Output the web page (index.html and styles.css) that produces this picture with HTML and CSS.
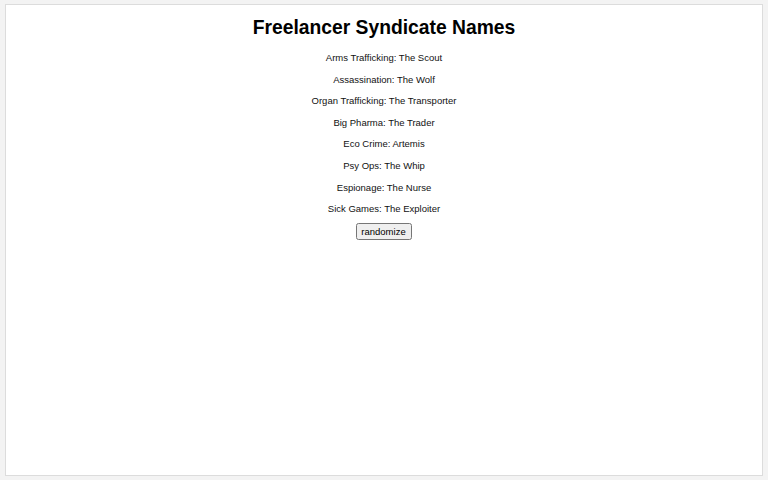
FILE: index.html
```html
<!DOCTYPE html>
<html>
<head>
<meta charset="utf-8">
<link rel="stylesheet" href="styles.css">
</head>
<body>
<div class="card">
  <h1 class="title">Freelancer Syndicate Names</h1>
  <p class="line">Arms Trafficking: The Scout</p>
  <p class="line">Assassination: The Wolf</p>
  <p class="line">Organ Trafficking: The Transporter</p>
  <p class="line">Big Pharma: The Trader</p>
  <p class="line">Eco Crime: Artemis</p>
  <p class="line">Psy Ops: The Whip</p>
  <p class="line">Espionage: The Nurse</p>
  <p class="line">Sick Games: The Exploiter</p>
  <div class="actions"><button class="btn">randomize</button></div>
</div>
</body>
</html>
```
FILE: styles.css
```css
html, body {
  margin: 0;
  height: 100%;
}
body {
  background: #f3f3f3;
  padding: 4px 5px 5px 5px;
  box-sizing: border-box;
  font-family: "Liberation Sans", Arial, sans-serif;
}
.card {
  background: #fff;
  border: 1px solid #dcdcdc;
  height: 472px;
  box-sizing: border-box;
  width: 758px;
  text-align: center;
  color: #111;
}
.title {
  font-size: 19.3px;
  font-weight: bold;
  margin: 12px 0 13px;
  color: #000;
}
.line {
  font-size: 9.5px;
  margin: 10px 0;
  line-height: 11.6px;
}
.actions {
  display: flex;
  justify-content: center;
  margin-top: -2px;
}
.btn {
  font-family: "Liberation Sans", Arial, sans-serif;
  font-size: 9.5px;
  padding: 1px 4px 1px 3px;
  color: #000;
}
```
